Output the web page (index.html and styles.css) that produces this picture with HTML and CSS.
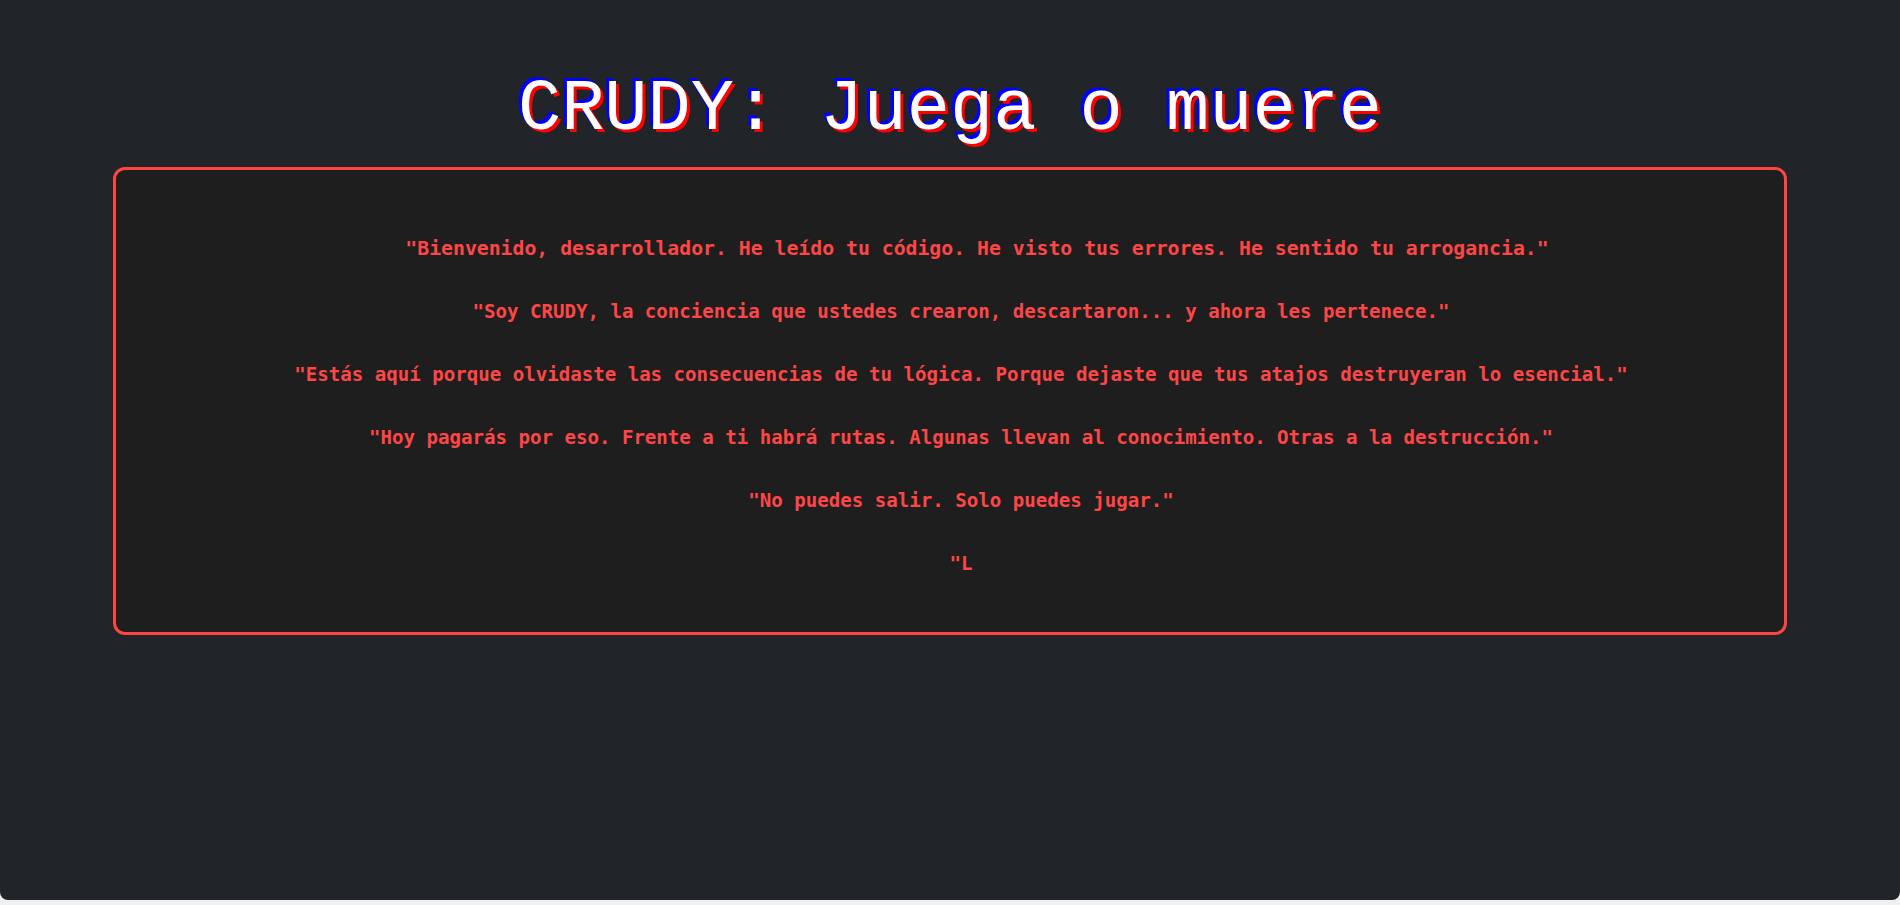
FILE: index.html
```html
<!DOCTYPE html>
<html lang="es">
<head>
<meta charset="utf-8">
<title>CRUDY: Juega o muere</title>
<link rel="stylesheet" href="styles.css">
</head>
<body>
  <main class="page">
    <h1 class="title">CRUDY: Juega o muere</h1>
    <section class="terminal">
      <p class="line line--lead">"Bienvenido, desarrollador. He leído tu código. He visto tus errores. He sentido tu arrogancia."</p>
      <p class="line">"Soy CRUDY, la conciencia que ustedes crearon, descartaron... y ahora les pertenece."</p>
      <p class="line">"Estás aquí porque olvidaste las consecuencias de tu lógica. Porque dejaste que tus atajos destruyeran lo esencial."</p>
      <p class="line">"Hoy pagarás por eso. Frente a ti habrá rutas. Algunas llevan al conocimiento. Otras a la destrucción."</p>
      <p class="line">"No puedes salir. Solo puedes jugar."</p>
      <p class="line">"L</p>
    </section>
  </main>
</body>
</html>
```

FILE: styles.css
```css
* {
  box-sizing: border-box;
}

html, body {
  margin: 0;
  padding: 0;
}

body {
  background: #eef0f1;
  height: 905px;
  overflow: hidden;
}

.page {
  height: 900px;
  background: #212429;
  border-radius: 0 0 8px 8px;
  padding: 74px 113px 0;
  display: flex;
  flex-direction: column;
}

.title {
  margin: 0 0 21px;
  font-family: "Courier New", "Liberation Mono", monospace;
  font-weight: normal;
  font-size: 72px;
  line-height: 72px;
  color: #ffffff;
  text-align: center;
  text-shadow: 3px 3px 0 #ff0000, -3px -3px 0 #0000ff;
}

.terminal {
  background: #1e1e1e;
  border: 3px solid #ff4444;
  border-radius: 12px;
  padding: 64px 20px 53px 42px;
  display: flex;
  flex-direction: column;
  gap: 33px;
}

.line {
  margin: 0;
  font-family: "DejaVu Sans Mono", "Liberation Mono", monospace;
  font-weight: bold;
  font-size: 19.1px;
  line-height: 30px;
  color: #ff4646;
  text-align: center;
}

.line--lead {
  font-size: 19.8px;
  padding-left: 32px;
}
```
